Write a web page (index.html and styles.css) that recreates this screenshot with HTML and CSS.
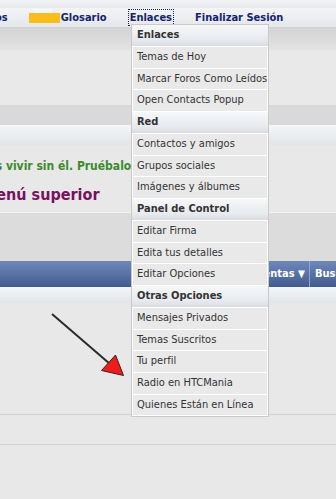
FILE: index.html
```html
<!DOCTYPE html>
<html lang="es">
<head>
    <meta charset="UTF-8">
    <meta name="viewport" content="width=device-width, initial-scale=1.0">
    <title>Enlaces</title>
    <link rel="stylesheet" href="styles.css">
</head>
<body>
    <div class="page">
        <div class="topstrip"></div>
        <div class="navbar">
            <a class="nav-link nav-cut" href="#">Foros</a>
            <span class="nav-new"><span class="new-label">nuevo</span></span>
            <a class="nav-link" href="#">Glosario</a>
            <a class="nav-link nav-active" href="#">Enlaces</a>
            <a class="nav-link" href="#">Finalizar Sesión</a>
        </div>
        <div class="subnav"></div>
        <div class="spacer"></div>
        <div class="band-dark"></div>
        <div class="band-light"></div>
        <div class="notice">
            <p class="green">No podrás vivir sin él. Pruébalo ya</p>
            <p class="title">Menú superior</p>
        </div>
        <div class="band-grey"></div>
        <div class="bluebar">
            <span class="blue-item">Herramientas <span class="caret">▼</span></span>
            <span class="blue-item blue-last">Buscar</span>
        </div>
        <div class="band-light small"></div>
        <div class="row-area"></div>
        <div class="row-area short"></div>
        <div class="rest"></div>
    </div>

    <ul class="dropdown">
        <li class="dd-head">Enlaces</li>
        <li>Temas de Hoy</li>
        <li>Marcar Foros Como Leídos</li>
        <li>Open Contacts Popup</li>
        <li class="dd-head">Red</li>
        <li>Contactos y amigos</li>
        <li>Grupos sociales</li>
        <li>Imágenes y álbumes</li>
        <li class="dd-head">Panel de Control</li>
        <li>Editar Firma</li>
        <li>Edita tus detalles</li>
        <li>Editar Opciones</li>
        <li class="dd-head">Otras Opciones</li>
        <li>Mensajes Privados</li>
        <li>Temas Suscritos</li>
        <li>Tu perfil</li>
        <li>Radio en HTCMania</li>
        <li>Quienes Están en Línea</li>
    </ul>

    <svg class="arrow" width="336" height="499" viewBox="0 0 336 499">
        <line x1="52" y1="314" x2="110" y2="364" stroke="#2a2a2a" stroke-width="2"/>
        <polygon points="101.5,370.5 115.5,355 123.5,375.5" fill="#ee1c1c" stroke="#3a2020" stroke-width="1"/>
    </svg>
</body>
</html>
```

FILE: styles.css
```css
body {
    margin: 0;
    background-color: #e8e8e8;
    font-family: Tahoma, "DejaVu Sans Condensed", "DejaVu Sans", sans-serif;
    font-size: 11px;
    overflow: hidden;
}
.page {
    width: 336px;
    height: 499px;
    overflow: hidden;
}
.topstrip {
    height: 8px;
    background: linear-gradient(#f2f3f5, #e6e8eb);
}
.navbar {
    height: 19px;
    display: flex;
    align-items: center;
    background: linear-gradient(#f3f4f6, #e4e7eb);
    white-space: nowrap;
}
.nav-link {
    color: #14236b;
    font-weight: bold;
    text-decoration: none;
    margin-right: 23px;
}
.nav-cut {
    margin-left: -23px;
    margin-right: 21px;
}
.nav-new {
    position: relative;
    width: 31px;
    height: 10px;
    background-color: #fbbd1c;
    margin-right: 1px;
}
.new-label {
    position: absolute;
    top: -6px;
    left: 4px;
    font-size: 7px;
    color: #fff;
}
.nav-active {
    outline: 1px dotted #14236b;
    outline-offset: 1px;
}
.subnav {
    height: 23px;
    background: linear-gradient(#d3d3d3, #e3e3e3);
}
.spacer {
    height: 55px;
    background-color: #e9e9e9;
}
.band-dark {
    height: 20px;
    background-color: #d9d9d9;
}
.band-light {
    height: 20px;
    background: linear-gradient(#f4f5f7, #e2e5e9);
}
.band-light.small {
    height: 16px;
}
.notice {
    height: 67px;
    background-color: #e8e8e8;
    white-space: nowrap;
    border-bottom: 1px solid #f2f2f2;
}
.notice p {
    margin: 0;
    font-weight: bold;
}
.green {
    color: #3d8a2c;
    font-size: 12px;
    padding-top: 14px;
    text-indent: -60px;
}
.title {
    color: #78115f;
    font-size: 16px;
    padding-top: 12px;
    text-indent: -18px;
}
.band-grey {
    height: 48px;
    background-color: #dcdcdc;
}
.bluebar {
    height: 26px;
    display: flex;
    align-items: center;
    justify-content: flex-end;
    background: linear-gradient(#6d88b8, #5670a4 55%, #405a8e);
    white-space: nowrap;
}
.blue-item {
    color: #fff;
    font-weight: bold;
    padding: 0 4px 0 5px;
    line-height: 26px;
    flex-shrink: 0;
}
.blue-last {
    width: 21px;
    padding-right: 0;
    overflow: hidden;
    border-left: 1px solid #8ea4cc;
}
.caret {
    font-size: 10px;
}
.row-area {
    height: 111px;
    border-bottom: 1px solid #d0d0d0;
}
.row-area.short {
    height: 29px;
}
.rest {
    height: 60px;
}
.dropdown {
    position: absolute;
    top: 24px;
    left: 131px;
    width: 136px;
    margin: 0;
    padding: 0;
    list-style: none;
    border: 1px solid #c9c9c9;
    box-shadow: inset 0 0 0 1px #fff;
    background-color: #e9e9e9;
}
.dropdown li {
    height: 20.75px;
    line-height: 20px;
    padding-left: 5px;
    color: #333;
    border-bottom: 1px solid #fff;
    white-space: nowrap;
}
.dropdown li:last-child {
    border-bottom: none;
}
.dropdown .dd-head {
    font-weight: bold;
    color: #333;
    background: linear-gradient(#f6f7f9, #e7eaee 70%, #d9dde2);
}
.arrow {
    position: absolute;
    top: 0;
    left: 0;
    pointer-events: none;
}
```
